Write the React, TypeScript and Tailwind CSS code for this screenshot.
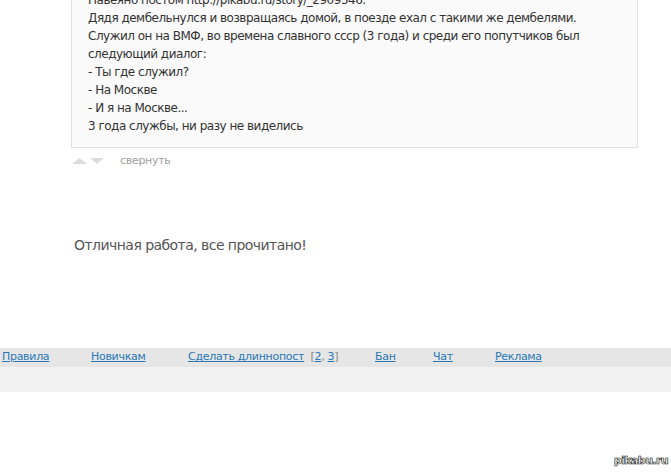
import React from "react";

const font = { fontFamily: '"DejaVu Sans", Verdana, sans-serif' };

export default function App() {
  const lines = [
    "Навеяно постом http://pikabu.ru/story/_2909546.",
    "Дядя дембельнулся и возвращаясь домой, в поезде ехал с такими же дембелями.",
    "Служил он на ВМФ, во времена славного ссср (3 года) и среди его попутчиков был",
    "следующий диалог:",
    "- Ты где служил?",
    "- На Москве",
    "- И я на Москве...",
    "3 года службы, ни разу не виделись",
  ];
  return (
    <div className="relative h-[475px] w-[671px] overflow-hidden bg-white" style={font}>
      <div className="ml-[71px] mt-[-18px] w-[567px] border border-[#dde0e4] bg-[#fafafa] pl-[16px] pr-[10px] pt-[8px] pb-[12px] text-[12px] leading-[18px] tracking-[-0.5px] text-[#333]">
        {lines.map((l, i) => (
          <div key={i} className="whitespace-nowrap">{l}</div>
        ))}
      </div>
      <div className="ml-[72px] mt-[5px] flex h-[16px] items-center">
        <svg width="15" height="6" viewBox="0 0 15 6"><polygon points="0,6 7.5,0 15,6" fill="#dcdcdc" /></svg>
        <svg width="14" height="6" viewBox="0 0 14 6" className="ml-[3px]"><polygon points="0,0 14,0 7,6" fill="#dcdcdc" /></svg>
        <span className="ml-[16px] text-[11px] tracking-[-0.3px] text-[#a0a0a0]">свернуть</span>
      </div>
      <div className="ml-[74px] mt-[67px] text-[14px] leading-[18px] tracking-[-0.55px] text-[#555]">Отличная работа, все прочитано!</div>
      <div className="mt-[94px]">
        <div className="flex h-[19px] items-center bg-[#e6e6e6] text-[11px] tracking-[-0.3px] text-[#2a78b8]">
          <a className="ml-[2px] w-[89px] underline">Правила</a>
          <a className="w-[97px] underline">Новичкам</a>
          <span className="w-[187px] whitespace-nowrap text-[#888]">
            <a className="text-[#2a78b8] underline">Сделать длиннопост</a>&nbsp;&nbsp;[<a className="text-[#2a78b8] underline">2</a>, <a className="text-[#2a78b8] underline">3</a>]
          </span>
          <a className="w-[58px] underline">Бан</a>
          <a className="w-[62px] underline">Чат</a>
          <a className="underline">Реклама</a>
        </div>
        <div className="h-[25px] bg-[#f2f2f2]" />
      </div>
      <div
        className="absolute bottom-[6px] right-[3px] text-[11px] font-bold tracking-[-0.6px] text-white"
        style={{ ...font, WebkitTextStroke: "0.6px #333", textShadow: "0 0 1px #333" }}
      >
        pikabu.ru
      </div>
    </div>
  );
}
